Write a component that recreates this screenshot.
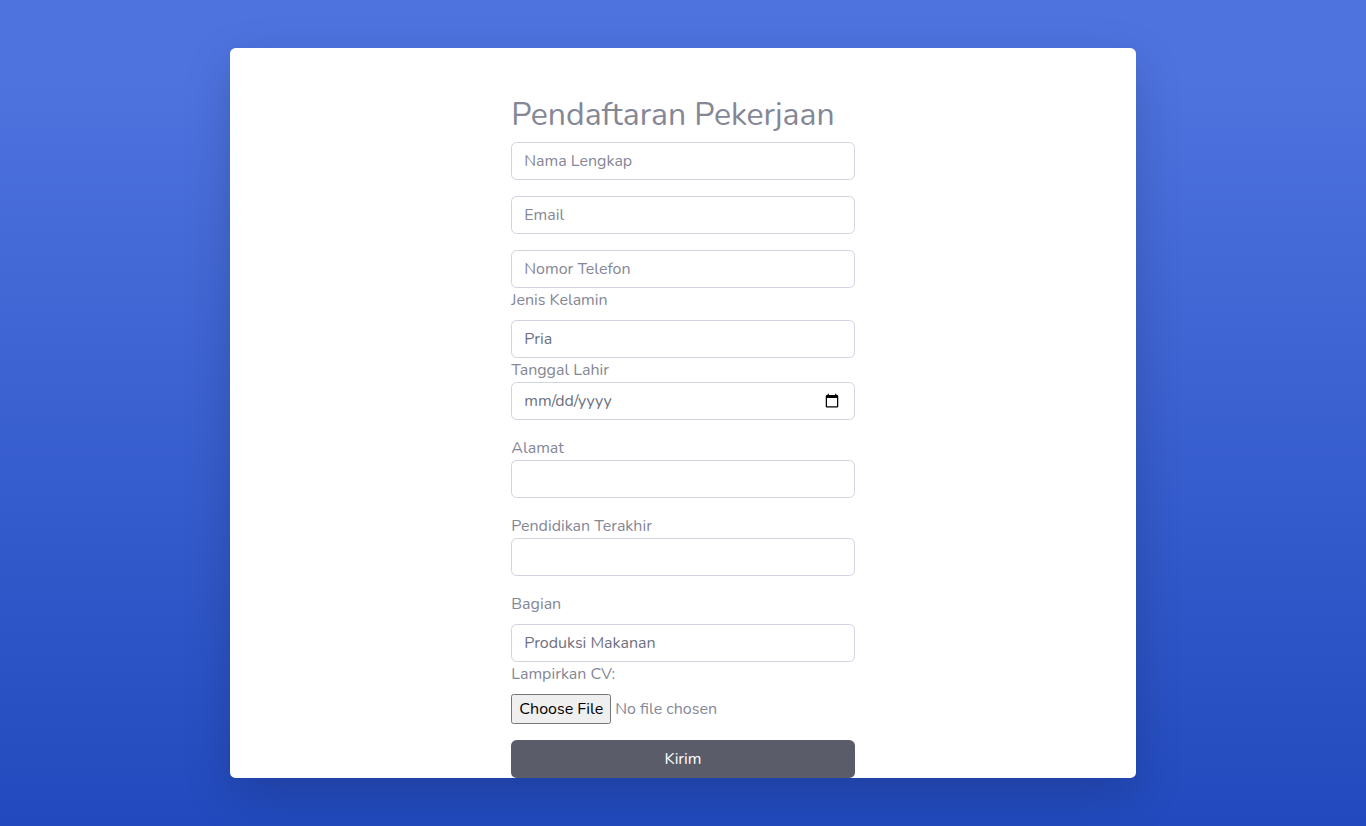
<main>
  <section class="card">
    <form onsubmit={(e) => e.preventDefault()}>
      <h1>Pendaftaran Pekerjaan</h1>
      <input class="control gap" type="text" placeholder="Nama Lengkap" />
      <input class="control gap" type="email" placeholder="Email" />
      <input class="control" type="text" placeholder="Nomor Telefon" />
      <label class="spaced" for="gender">Jenis Kelamin</label>
      <select class="control" id="gender">
        <option>Pria</option>
        <option>Wanita</option>
      </select>
      <label for="birth">Tanggal Lahir</label>
      <input class="control date gap" id="birth" type="date" />
      <label for="address">Alamat</label>
      <input class="control gap" id="address" type="text" />
      <label for="education">Pendidikan Terakhir</label>
      <input class="control gap" id="education" type="text" />
      <label class="spaced" for="section">Bagian</label>
      <select class="control" id="section">
        <option>Produksi Makanan</option>
      </select>
      <label class="spaced" for="cv">Lampirkan CV:</label>
      <input class="file" id="cv" type="file" />
      <button class="submit" type="submit">Kirim</button>
    </form>
  </section>
</main>

<style>
  :global(body) {
    margin: 0;
    overflow: hidden;
  }
  main {
    box-sizing: border-box;
    height: 826px;
    padding: 48px 230px;
    background: linear-gradient(180deg, #4e73df 10%, #224abe 100%);
    font-family: Nunito, Lato, sans-serif;
    font-size: 16px;
    line-height: 24px;
    color: #858796;
  }
  .card {
    box-sizing: border-box;
    height: 730px;
    padding-top: 48px;
    border-radius: 5.6px;
    background: #fff;
    box-shadow: 0 16px 48px rgba(0, 0, 0, 0.175);
  }
  form {
    display: flex;
    flex-direction: column;
    width: 343.5px;
    margin: 0 auto;
  }
  h1 {
    margin: 0 0 8px;
    font-size: 32px;
    font-weight: 400;
    line-height: 38px;
  }
  .control {
    box-sizing: border-box;
    width: 100%;
    height: 38px;
    margin: 0;
    padding: 6px 12px;
    border: 1px solid #d1d3e2;
    border-radius: 5.6px;
    background: #fff;
    color: #6e707e;
    font: inherit;
    appearance: none;
    outline: none;
  }
  .control::placeholder {
    color: #858796;
    opacity: 1;
  }
  .date::-webkit-datetime-edit-month-field,
  .date::-webkit-datetime-edit-day-field,
  .date::-webkit-datetime-edit-year-field {
    padding: 0;
  }
  .gap {
    margin-bottom: 16px;
  }
  label {
    display: block;
    height: 24px;
  }
  .spaced {
    margin-bottom: 8px;
  }
  .file {
    width: 100%;
    height: 30px;
    margin: 0 0 16px;
    color: inherit;
    font: inherit;
  }
  .file::file-selector-button {
    box-sizing: border-box;
    width: 100px;
    height: 30px;
    font: inherit;
  }
  .submit {
    height: 38px;
    padding: 0;
    border: 0;
    border-radius: 5.6px;
    background: #5a5c69;
    color: #fff;
    font: inherit;
  }
</style>
